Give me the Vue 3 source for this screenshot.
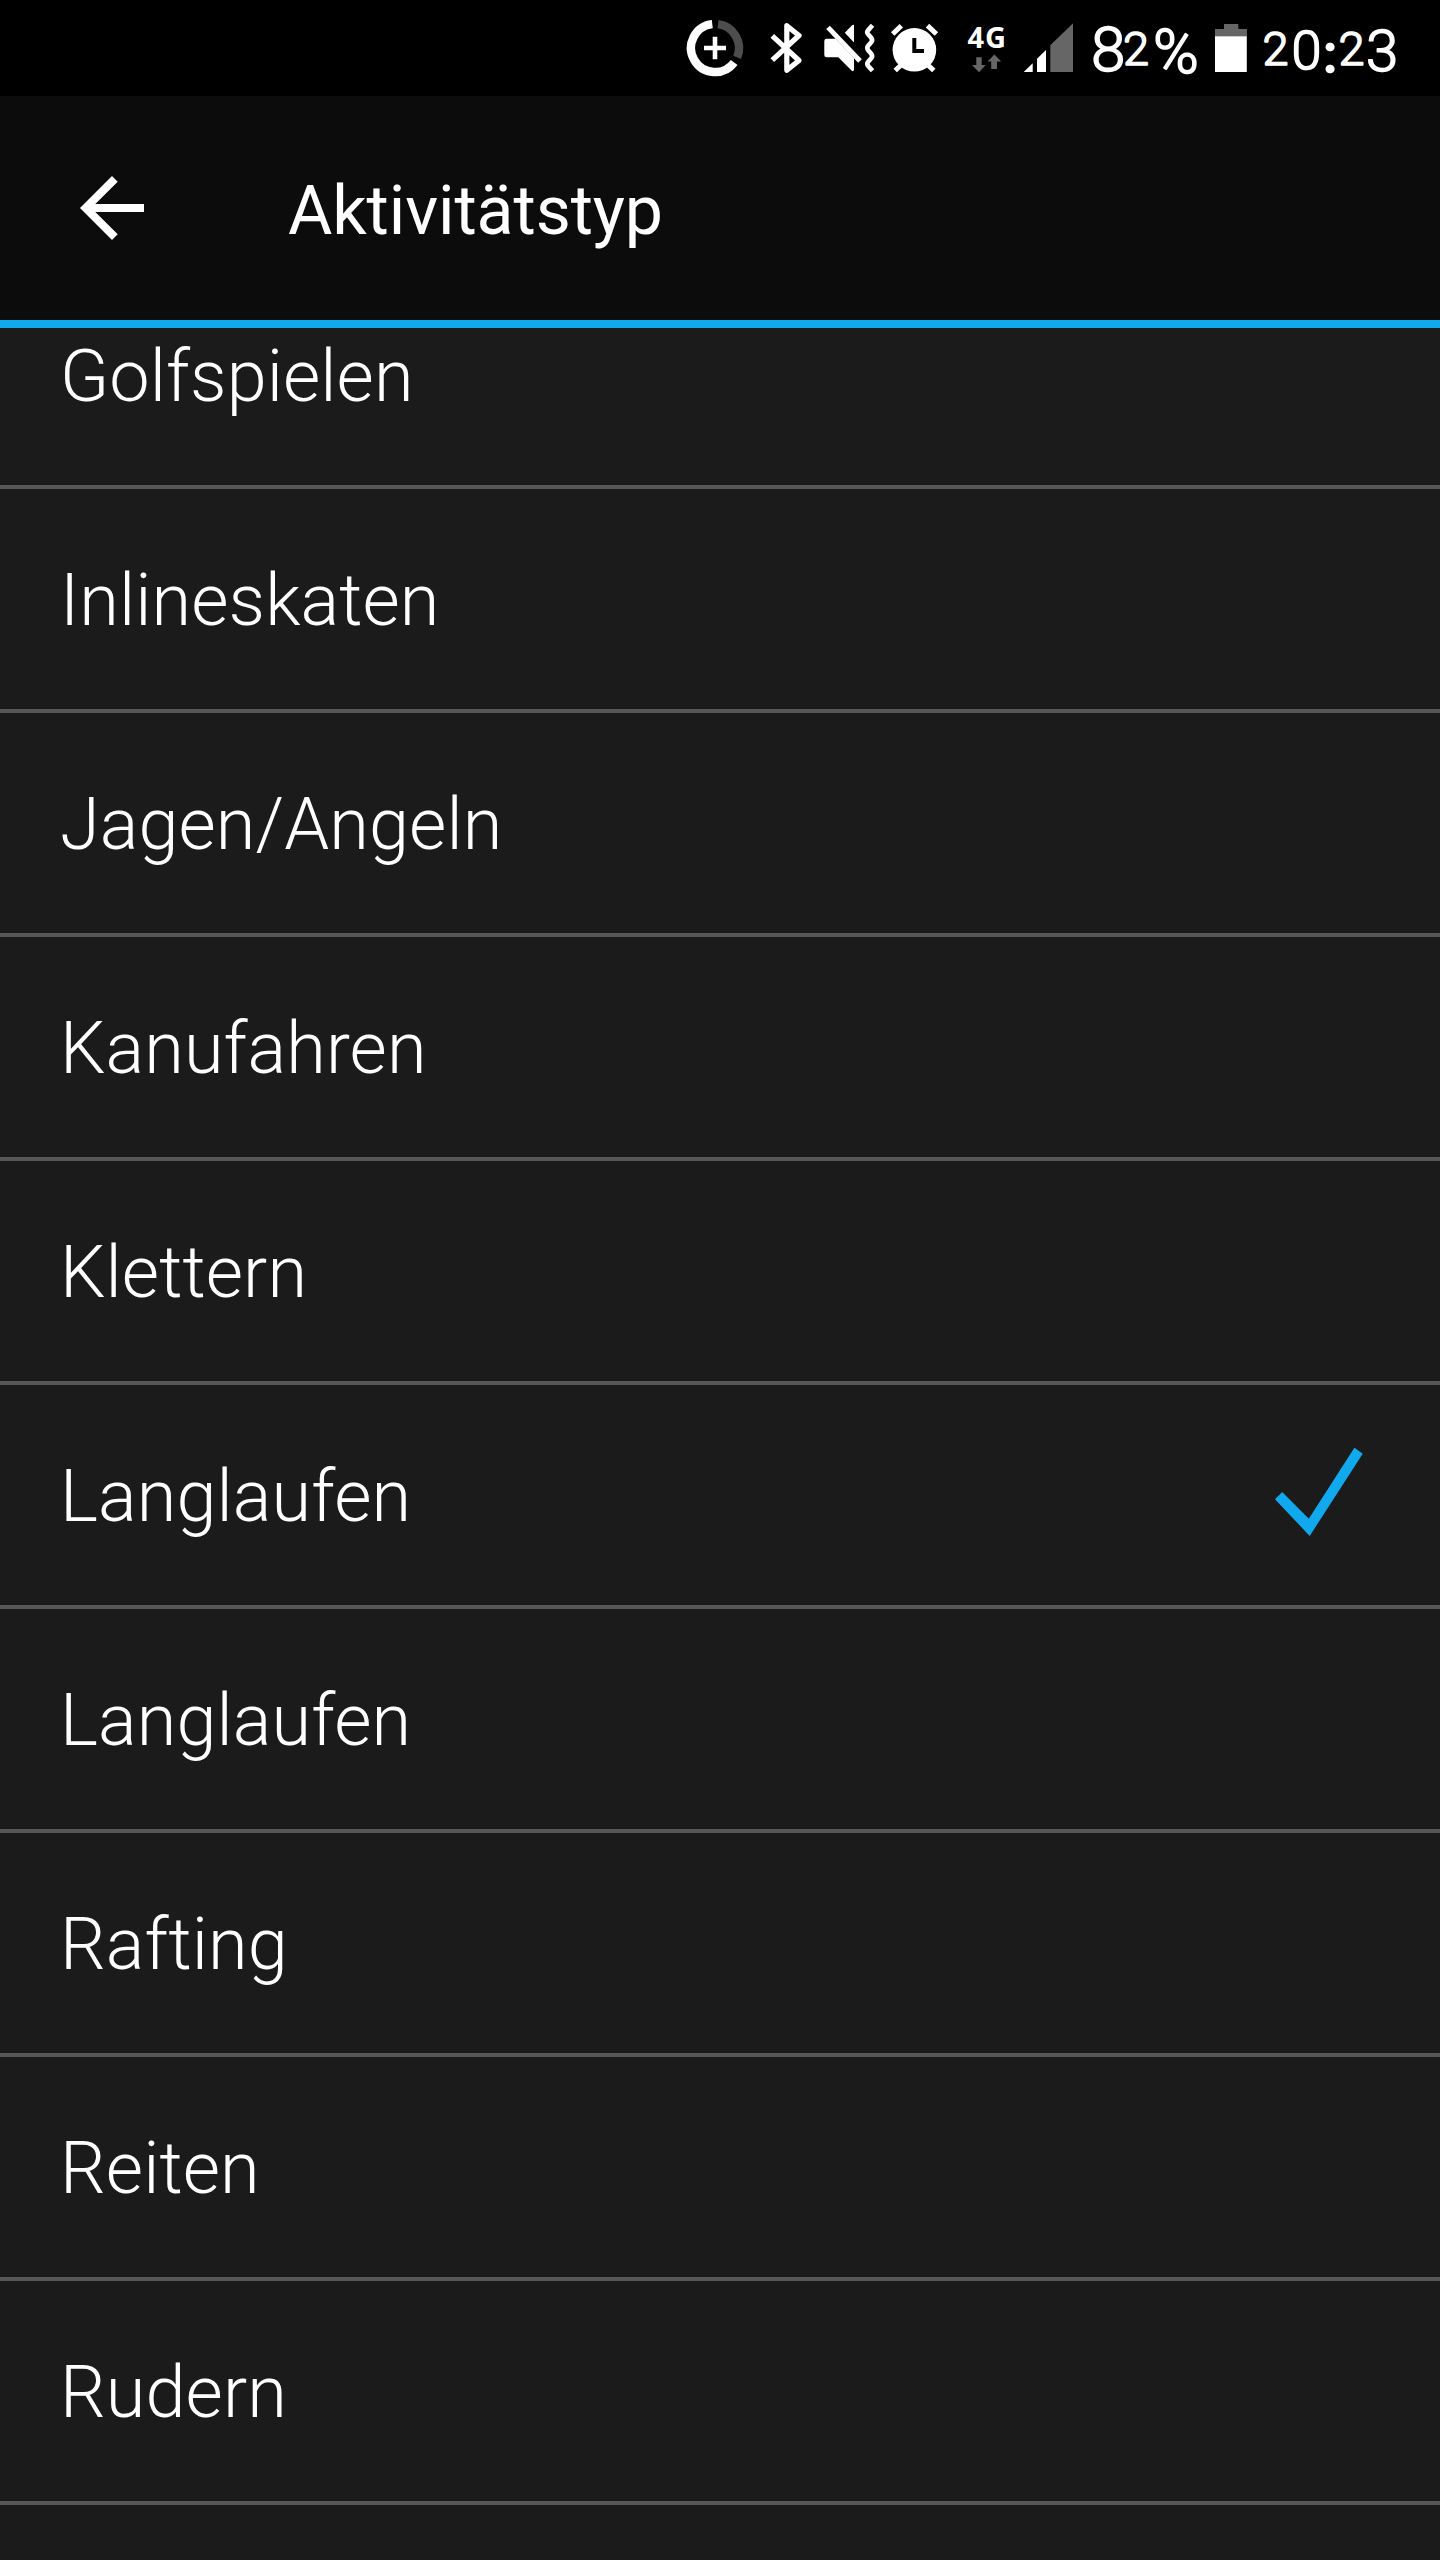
<script setup>
import { ref } from 'vue'

const activities = [
  'Golfspielen',
  'Inlineskaten',
  'Jagen/Angeln',
  'Kanufahren',
  'Klettern',
  'Langlaufen',
  'Langlaufen',
  'Rafting',
  'Reiten',
  'Rudern',
]

const selected = ref(5)
</script>

<template>
  <div class="screen">
    <div class="status-bar">
      <svg class="data-icon" width="64" height="96" viewBox="0 0 64 96" fill="none">
        <path d="M28.3 24.15A24 24 0 1 0 50.2 62.4" stroke="#fff" stroke-width="8.4" />
        <path d="M34 24.2A24 24 0 0 1 53.1 57.4" stroke="#4d4d4d" stroke-width="8.4" />
        <path d="M31 36.7v22.6M20 48h22" stroke="#fff" stroke-width="4.6" />
      </svg>
      <svg class="bluetooth-icon" width="38" height="96" viewBox="0 0 38 96" fill="none">
        <path
          d="M4.3 35.8L31 60.5 18.8 70.3V25.7L31 35.5 4.3 60.2"
          stroke="#fff"
          stroke-width="5.2"
          stroke-linejoin="round"
        />
      </svg>
      <svg class="mute-icon" width="54" height="96" viewBox="0 0 54 96">
        <path
          d="M2.3 41q0-2.3 2.3-2.3h9L32 58v12q-.5 1.6-2 1L16.3 57.3H4.6q-2.3 0-2.3-2.3zM32 25v17.5l-9.2-9.7 7-7.3q1.2-1 2.2-.5z"
          fill="#fff"
        />
        <path d="M9 24.4L41.5 58" stroke="#000" stroke-width="3" />
        <path d="M6 27.4L38 61" stroke="#fff" stroke-width="5" />
        <path
          d="M50.5 25.3l-4.3 4.8q-2 2.3 0 4.2l2.8 3.2q2.2 2.8 0 5l-2.8 3.2q-1.8 2.3 0 4.6l2.8 3.2q2.2 2.8 0 5l-2.8 3.2q-1.8 2.2 0 4.3l4.3 4.8"
          fill="none"
          stroke="#fff"
          stroke-width="4.6"
        />
      </svg>
      <svg class="alarm-icon" width="50" height="96" viewBox="0 0 50 96" fill="none">
        <circle cx="24.4" cy="49.8" r="21.8" fill="#fff" />
        <path
          d="M2.7 34L11.3 25.7M37.5 25.7L46.4 34M5.2 70.5l7-6.5M43.8 70.5l-7-6.5"
          stroke="#fff"
          stroke-width="5"
        />
        <path d="M24.3 38v13H34" stroke="#000" stroke-width="4" />
      </svg>
      <svg class="network-icon" width="46" height="96" viewBox="0 0 46 96">
        <text x="3.6" y="47.7">4G</text>
        <path
          d="M12.3 57.3h5.4V65h4L15 72.3 8 65h4.3zM30.4 54.4L37.2 61.5H33V69h-5.8v-7.5h-3.6z"
          fill="#666"
        />
      </svg>
      <svg class="signal-icon" width="54" height="96" viewBox="0 0 54 96">
        <path d="M1.7 72h9v-8.7zM15 72V58.7L24 50v22z" fill="#fff" />
        <path d="M28.3 72V45.3L51 23.3V72z" fill="#666" />
      </svg>
      <svg class="battery-level" width="112" height="96" viewBox="0 0 112 96">
        <text><tspan x="-1" y="71" class="tall">8</tspan><tspan x="31" y="65" class="small">2</tspan><tspan x="61" y="73" class="percent">%</tspan></text>
      </svg>
      <svg class="battery-icon" width="32" height="96" viewBox="0 0 32 96">
        <path d="M9 24h14.3v5H32v7.5H0V29h9z" fill="#666" />
        <path d="M0 36.3h31.8V72H0z" fill="#fff" />
      </svg>
      <svg class="clock" width="140" height="96" viewBox="0 0 140 96">
        <text><tspan x="1.5" y="65" class="small">2</tspan><tspan x="30.5" y="69">0</tspan><tspan x="62" y="72" class="colon">:</tspan><tspan x="77.5" y="65" class="small">2</tspan><tspan x="105" y="71" class="three">3</tspan></text>
      </svg>
    </div>

    <header class="toolbar">
      <svg class="back-icon" width="64" height="64" viewBox="0 0 64 64">
        <path d="M64 28H15.3l22.4-22.3L32 0 0 32l32 32 5.7-5.7L15.3 36H64z" fill="#fff" />
      </svg>
      <h1>Aktivitätstyp</h1>
    </header>

    <ul class="activity-list">
      <li v-for="(activity, index) in activities" :key="index" @click="selected = index">
        <span>{{ activity }}</span>
        <svg v-if="index === selected" width="100" height="110" viewBox="0 0 100 110">
          <path d="M5 59.2L12.2 52l26.6 26.7L84.4 7.7l8.3 6L39.7 96z" fill="#11a9ed" />
        </svg>
      </li>
    </ul>
  </div>
</template>

<style>
body {
  margin: 0;
  background: #1b1b1b;
}
</style>

<style scoped>
.screen {
  display: flex;
  flex-direction: column;
  width: 1440px;
  height: 2560px;
  overflow: hidden;
  background: #1b1b1b;
  color: #fff;
  font-family: Roboto, sans-serif;
}

.status-bar {
  display: flex;
  flex: none;
  height: 96px;
  padding-left: 684px;
  background: #000;
}

.status-bar svg {
  flex: none;
}

.status-bar text {
  fill: #fff;
  font-size: 54px;
}

.battery-level text,
.clock text {
  font-weight: 300;
  stroke: #fff;
  stroke-width: 1.6px;
  stroke-linejoin: round;
}

.bluetooth-icon {
  margin-left: 20px;
}

.mute-icon {
  margin-left: 16px;
}

.alarm-icon {
  margin-left: 14px;
}

.network-icon {
  margin-left: 24px;
}

.status-bar .network-icon text {
  font-family: 'Noto Sans', sans-serif;
  font-size: 29px;
  font-weight: 700;
  letter-spacing: 0.8px;
}

.signal-icon {
  margin-left: 12px;
}

.battery-level {
  margin-left: 16px;
}

.battery-icon {
  margin-left: 11px;
}

.clock {
  margin-left: 14px;
}

.status-bar .tall {
  font-size: 62px;
}

.status-bar .small {
  font-size: 47px;
}

.status-bar .percent {
  font-size: 62px;
}

.status-bar .three {
  font-size: 58px;
}

.status-bar .colon {
  font-weight: 500;
}

.toolbar {
  display: flex;
  flex: none;
  align-items: center;
  box-sizing: border-box;
  height: 232px;
  padding-left: 80px;
  border-bottom: 8px solid #11a9ed;
  background: #0c0c0c;
}

.toolbar h1 {
  margin: 6px 0 0 144px;
  font-size: 68px;
  font-weight: 400;
  line-height: 80px;
  letter-spacing: -0.1px;
}

.activity-list {
  flex: 1;
  margin: 0;
  padding: 0;
  overflow: hidden;
  list-style: none;
}

.activity-list li {
  display: flex;
  align-items: center;
  justify-content: space-between;
  box-sizing: border-box;
  height: 224px;
  padding: 0 70px 0 60px;
  border-bottom: 4px solid #575757;
  font-size: 72px;
  font-weight: 300;
  letter-spacing: 0.1px;
}

.activity-list span {
  padding-top: 2px;
}

/* the list is scrolled, the first row is partly under the toolbar */
.activity-list li:first-child {
  margin-top: -63px;
}
</style>
